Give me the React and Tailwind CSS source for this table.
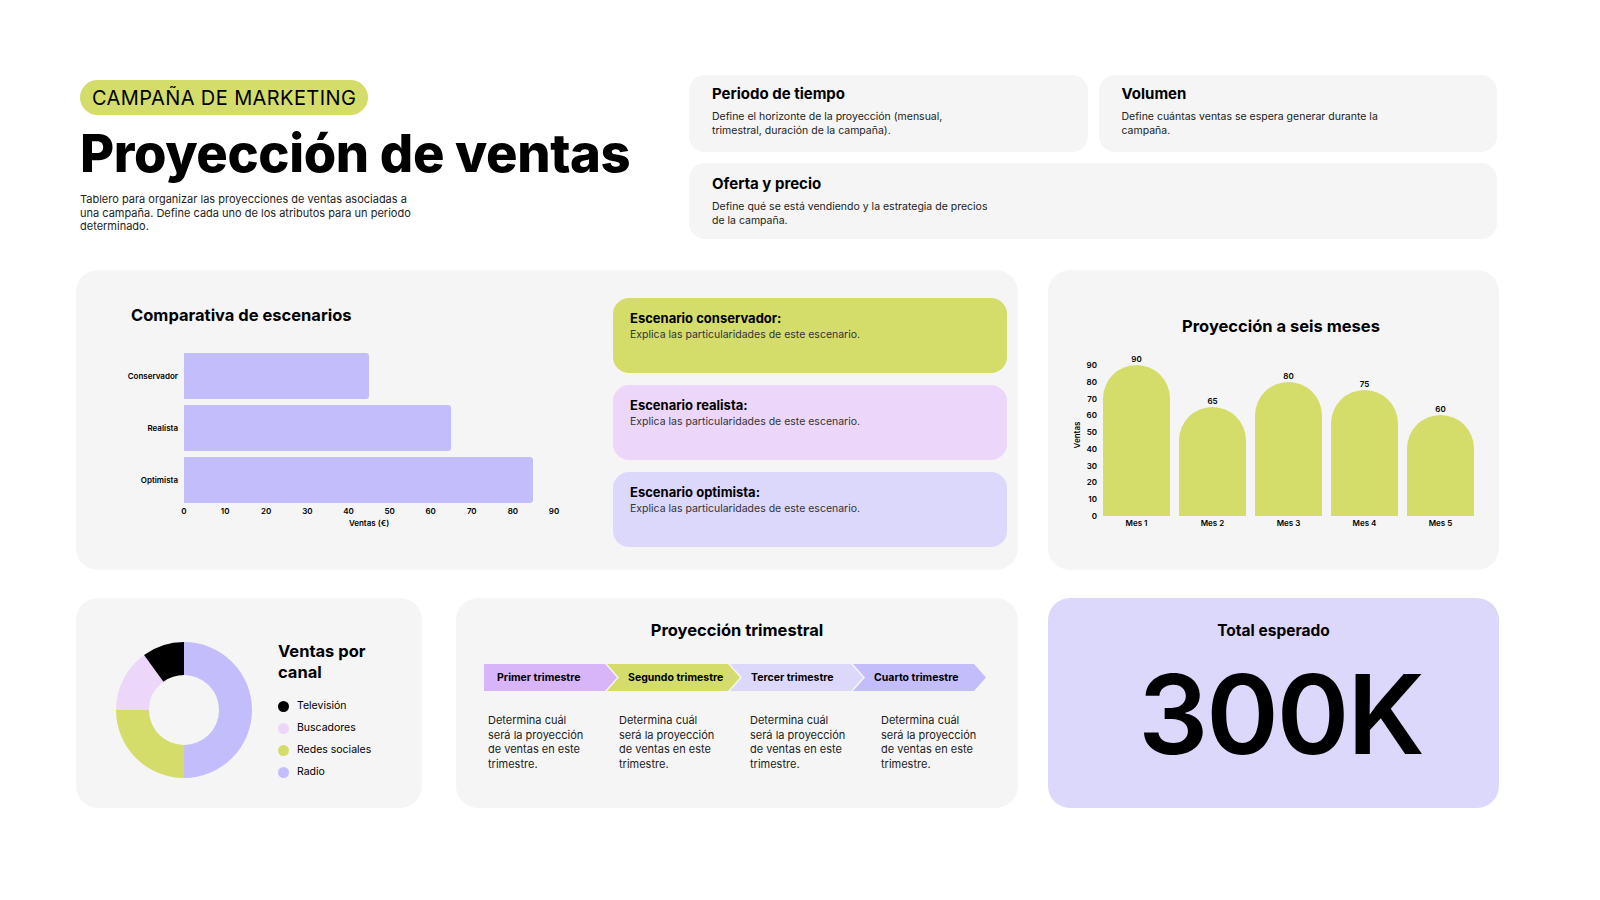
import React from "react";

const font = { fontFamily: "Inter, 'Noto Sans', sans-serif" };

const infoCards = [
  {
    title: "Periodo de tiempo",
    text: "Define el horizonte de la proyección (mensual, trimestral, duración de la campaña).",
  },
  {
    title: "Volumen",
    text: "Define cuántas ventas se espera generar durante la campaña.",
  },
];

const scenarios = [
  { title: "Escenario conservador:", bg: "bg-[#d4dd6a]" },
  { title: "Escenario realista:", bg: "bg-[#ecd7fb]" },
  { title: "Escenario optimista:", bg: "bg-[#dcd8fc]" },
];

const hBars = [
  { label: "Conservador", value: 45 },
  { label: "Realista", value: 65 },
  { label: "Optimista", value: 85 },
];

const months = [
  { label: "Mes 1", value: 90 },
  { label: "Mes 2", value: 65 },
  { label: "Mes 3", value: 80 },
  { label: "Mes 4", value: 75 },
  { label: "Mes 5", value: 60 },
];

const channels = [
  { label: "Televisión", color: "#000000", value: 10 },
  { label: "Buscadores", color: "#ecd7fb", value: 15 },
  { label: "Redes sociales", color: "#d4dd6a", value: 25 },
  { label: "Radio", color: "#c4bdfc", value: 50 },
];

const quarters = [
  { label: "Primer trimestre", bg: "bg-[#d8b4f8]" },
  { label: "Segundo trimestre", bg: "bg-[#d4dd6a]" },
  { label: "Tercer trimestre", bg: "bg-[#dcd8fc]" },
  { label: "Cuarto trimestre", bg: "bg-[#c4bdfc]" },
];

// arco de dona, ángulos en grados desde arriba en sentido horario
const arc = (cx, cy, r1, r2, a0, a1) => {
  const p = (r, a) => {
    const rad = ((a - 90) * Math.PI) / 180;
    return [cx + r * Math.cos(rad), cy + r * Math.sin(rad)];
  };
  const large = a1 - a0 > 180 ? 1 : 0;
  const [x1, y1] = p(r1, a0);
  const [x2, y2] = p(r1, a1);
  const [x3, y3] = p(r2, a1);
  const [x4, y4] = p(r2, a0);
  return `M${x1} ${y1} A${r1} ${r1} 0 ${large} 1 ${x2} ${y2} L${x3} ${y3} A${r2} ${r2} 0 ${large} 0 ${x4} ${y4} Z`;
};

const Donut = () => {
  // orden horario desde arriba: Radio, Redes, Buscadores, TV
  const order = [channels[3], channels[2], channels[1], channels[0]];
  let start = 0;
  return (
    <svg width="140" height="140" viewBox="0 0 140 140">
      {order.map((c) => {
        const end = start + (c.value / 100) * 360;
        const d = arc(70, 70, 68, 35, start, end);
        start = end;
        return <path key={c.label} d={d} fill={c.color} />;
      })}
    </svg>
  );
};

const HorizontalChart = () => {
  const unit = 370 / 90;
  return (
    <div className="mt-[27px] flex">
      <div className="flex w-[108px] flex-col gap-[6px] pr-[6px]">
        {hBars.map((b) => (
          <div key={b.label} className="flex h-[46px] items-center justify-end text-[8px] font-semibold">
            {b.label}
          </div>
        ))}
      </div>
      <div className="w-[390px]">
        <div className="flex flex-col gap-[6px]">
          {hBars.map((b) => (
            <div
              key={b.label}
              className="h-[46px] rounded-r-[3px] bg-[#c4bdfc]"
              style={{ width: b.value * unit }}
            />
          ))}
        </div>
        <div className="relative h-[14px]">
          {Array.from({ length: 10 }, (_, i) => (
            <span
              key={i}
              className="absolute top-[2px] w-[20px] -translate-x-1/2 text-center text-[8px] font-semibold"
              style={{ left: i * 10 * unit }}
            >
              {i * 10}
            </span>
          ))}
        </div>
        <div className="w-[370px] text-center text-[8px] font-semibold">Ventas (€)</div>
      </div>
    </div>
  );
};

const MonthChart = () => {
  const unit = 151 / 90;
  return (
    <div className="mt-[17px] flex items-end">
      <div className="flex h-[176px] w-[14px] items-center justify-center pb-[14px]">
        <span className="-rotate-90 text-[8px] font-semibold">Ventas</span>
      </div>
      <div className="relative mr-[6px] h-[176px] w-[13px]">
        {Array.from({ length: 10 }, (_, i) => (
          <span
            key={i}
            className="absolute right-0 translate-y-1/2 text-[8px] leading-[10px] font-semibold"
            style={{ bottom: 14 + i * 10 * unit }}
          >
            {i * 10}
          </span>
        ))}
      </div>
      <div className="flex items-end gap-[9px]">
        {months.map((m) => (
          <div key={m.label} className="flex w-[67px] flex-col items-center">
            <span className="mb-[1px] text-[8px] leading-[10px] font-semibold">{m.value}</span>
            <div className="w-[67px] rounded-t-full bg-[#d4dd6a]" style={{ height: m.value * unit }} />
            <span className="flex h-[14px] items-center text-[8px] font-semibold">{m.label}</span>
          </div>
        ))}
      </div>
    </div>
  );
};

export default function App() {
  return (
    <div className="min-h-screen w-full bg-white text-black" style={font}>
      <div className="pl-[76px] pt-[75px]" style={{ width: 1500 }}>
        {/* Cabecera */}
        <div className="flex">
          <div className="w-[613px] pl-[4px] pt-[5px]">
            <span className="inline-flex h-[35px] items-center rounded-full bg-[#d4dd6a] px-[12px] text-[20px] tracking-[0.4px]">
              CAMPAÑA DE MARKETING
            </span>
            <h1 className="mt-[6px] text-[52.5px] font-extrabold leading-[64px] tracking-[-0.4px]">
              Proyección de ventas
            </h1>
            <p className="mt-[8px] w-[345px] text-[11px] leading-[13.5px] text-[#222]">
              Tablero para organizar las proyecciones de ventas asociadas a una campaña. Define cada uno de los
              atributos para un periodo determinado.
            </p>
          </div>
          <div className="grid w-[808px] grid-cols-2 gap-[11px]">
            {infoCards.map((c) => (
              <div key={c.title} className="h-[77px] rounded-[16px] bg-[#f5f5f5] pl-[23px] pt-[9px]">
                <h3 className="text-[15px] font-bold leading-[20px]">{c.title}</h3>
                <p className="mt-[6px] w-[270px] text-[10.5px] leading-[13.5px] text-[#222]">{c.text}</p>
              </div>
            ))}
            <div className="col-span-2 h-[76px] rounded-[16px] bg-[#f5f5f5] pl-[23px] pt-[11px]">
              <h3 className="text-[15px] font-bold leading-[20px]">Oferta y precio</h3>
              <p className="mt-[6px] w-[290px] text-[10.5px] leading-[13.5px] text-[#222]">
                Define qué se está vendiendo y la estrategia de precios de la campaña.
              </p>
            </div>
          </div>
        </div>

        {/* Fila central */}
        <div className="mt-[31px] flex gap-[30px]">
          <div className="flex h-[300px] w-[942px] rounded-[22px] bg-[#f5f5f5] pr-[11px] pt-[28px]">
            <div className="flex-1">
              <h2 className="ml-[55px] mt-[6px] text-[16.5px] font-bold leading-[22px]">Comparativa de escenarios</h2>
              <HorizontalChart />
            </div>
            <div className="flex w-[394px] flex-col gap-[12px]">
              {scenarios.map((s) => (
                <div key={s.title} className={`h-[75px] rounded-[16px] ${s.bg} pl-[17px] pt-[11px]`}>
                  <h4 className="text-[13px] font-bold leading-[18px]">{s.title}</h4>
                  <p className="text-[10.5px] leading-[15px] text-[#333]">
                    Explica las particularidades de este escenario.
                  </p>
                </div>
              ))}
            </div>
          </div>
          <div className="h-[300px] w-[451px] rounded-[22px] bg-[#f5f5f5] pl-[22px] pt-[45px]">
            <h2 className="pr-[7px] text-center text-[16.5px] font-bold leading-[22px]">Proyección a seis meses</h2>
            <MonthChart />
          </div>
        </div>

        {/* Fila inferior */}
        <div className="mt-[28px] flex">
          <div className="flex h-[210px] w-[346px] items-center rounded-[22px] bg-[#f5f5f5] pl-[38px] pt-[14px]">
            <Donut />
            <div className="ml-[24px]">
              <h3 className="text-[16.5px] font-bold leading-[21px]">
                Ventas por
                <br />
                canal
              </h3>
              <ul className="mt-[16px] flex flex-col gap-[8px]">
                {channels.map((c) => (
                  <li key={c.label} className="flex items-center gap-[8px] text-[10.5px] leading-[14px]">
                    <span className="h-[11px] w-[11px] rounded-full" style={{ background: c.color }} />
                    {c.label}
                  </li>
                ))}
              </ul>
            </div>
          </div>

          <div className="ml-[34px] h-[210px] w-[562px] rounded-[22px] bg-[#f5f5f5] pt-[21px]">
            <h2 className="text-center text-[16.5px] font-bold leading-[22px]">Proyección trimestral</h2>
            <div className="ml-[28px] mt-[23px] flex">
              {quarters.map((q, i) => (
                <div
                  key={q.label}
                  className={`flex h-[27px] w-[133px] items-center text-[10.5px] font-bold ${q.bg} ${
                    i === 0
                      ? "pl-[13px] [clip-path:polygon(0_0,calc(100%-12px)_0,100%_50%,calc(100%-12px)_100%,0_100%)]"
                      : "-ml-[10px] pl-[21px] [clip-path:polygon(0_0,calc(100%-12px)_0,100%_50%,calc(100%-12px)_100%,0_100%,12px_50%)]"
                  }`}
                >
                  {q.label}
                </div>
              ))}
            </div>
            <div className="ml-[32px] mt-[22px] flex">
              {quarters.map((q, i) => (
                <p key={q.label} className={`w-[98px] text-[11px] leading-[14.5px] text-[#222] ${i > 0 ? "ml-[33px]" : ""}`}>
                  Determina cuál será la proyección de ventas en este trimestre.
                </p>
              ))}
            </div>
          </div>

          <div className="ml-[30px] flex h-[210px] w-[451px] flex-col items-center rounded-[22px] bg-[#dcd8fc] pt-[23px]">
            <h2 className="text-[15.5px] font-bold leading-[20px]">Total esperado</h2>
            <div className="mt-[18px] pl-[14px] text-[110px] font-semibold leading-[110px] tracking-[-2px]">300K</div>
          </div>
        </div>
      </div>
    </div>
  );
}
